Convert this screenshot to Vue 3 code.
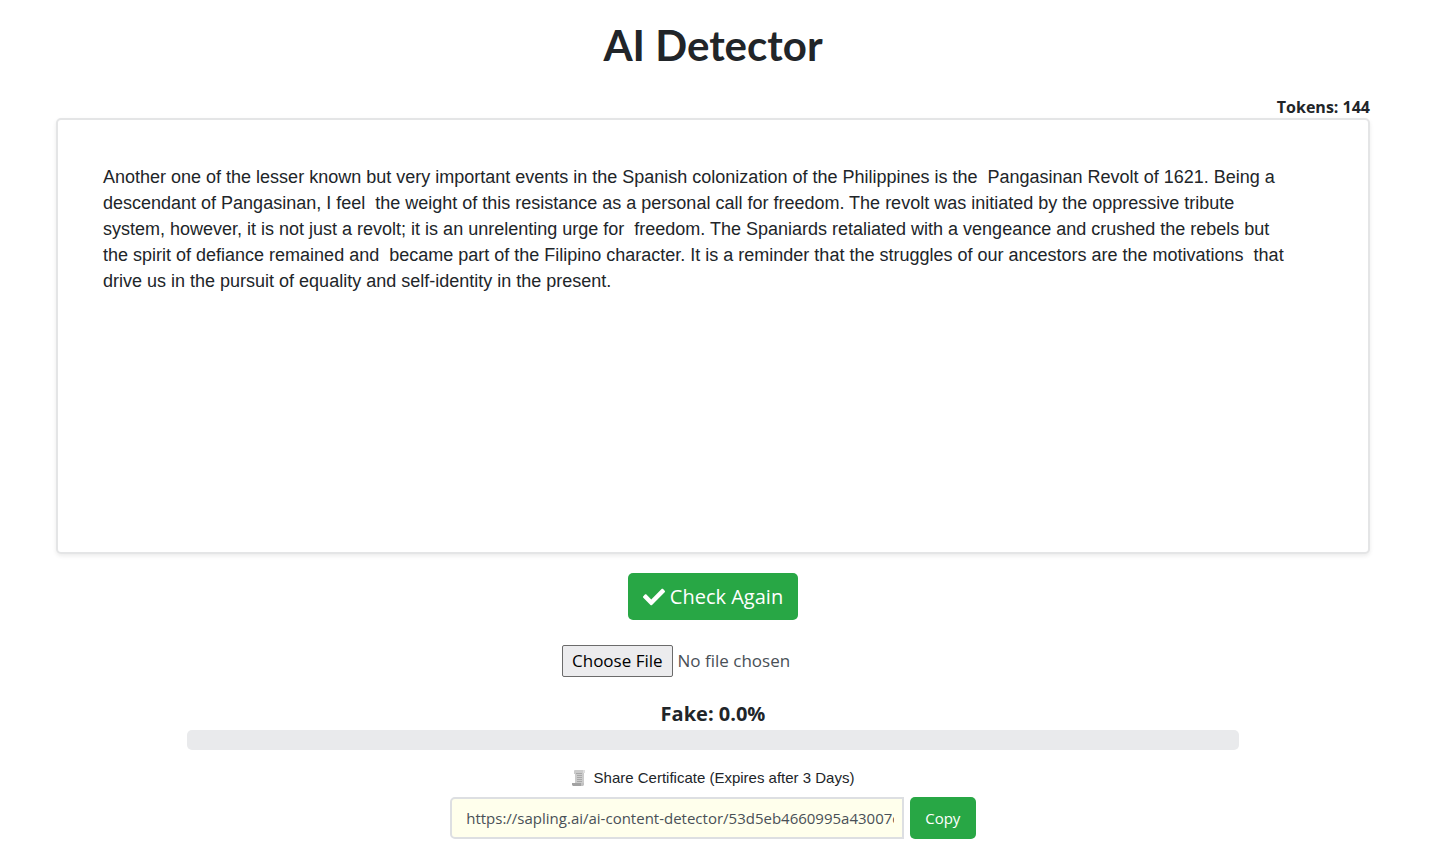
<script setup>
import { ref } from 'vue'

const text = ref(
  'Another one of the lesser known but very important events in the Spanish colonization of the Philippines is the  Pangasinan Revolt of 1621. Being a descendant of Pangasinan, I feel  the weight of this resistance as a personal call for freedom. The revolt was initiated by the oppressive tribute system, however, it is not just a revolt; it is an unrelenting urge for  freedom. The Spaniards retaliated with a vengeance and crushed the rebels but the spirit of defiance remained and  became part of the Filipino character. It is a reminder that the struggles of our ancestors are the motivations  that drive us in the pursuit of equality and self-identity in the present.'
)
const tokens = ref(144)
const fake = ref(0)
const shareUrl = ref('https://sapling.ai/ai-content-detector/53d5eb4660995a43007c')
</script>

<template>
  <main class="page">
    <h1 class="title">AI Detector</h1>
    <div class="tokens">Tokens: {{ tokens }}</div>
    <textarea v-model="text" class="editor" aria-label="Text to check" spellcheck="false"></textarea>

    <button type="button" class="btn check">
      <svg class="tick" viewBox="0 0 512 512" aria-hidden="true">
        <path fill="currentColor" d="M173.9 439.4l-166.4-166.4c-10-10-10-26.2 0-36.2l36.2-36.2c10-10 26.2-10 36.2 0L192 312.7 432.1 72.6c10-10 26.2-10 36.2 0l36.2 36.2c10 10 10 26.2 0 36.2l-294.4 294.4c-10 10-26.2 10-36.2 0z" />
      </svg>
      <span>Check Again</span>
    </button>

    <input type="file" class="file" aria-label="Upload a file" />

    <div class="score">Fake: {{ fake.toFixed(1) }}%</div>
    <div class="bar" role="progressbar" :aria-valuenow="fake" aria-valuemin="0" aria-valuemax="100">
      <div class="fill" :style="{ width: fake + '%' }"></div>
    </div>

    <label class="share-label" for="share-url">
      <svg class="scroll" viewBox="0 0 14 16" aria-hidden="true">
        <path fill="#cbcbcb" d="M2 1q0-1 1-1h10v3h-1v12H3V4H2z" />
        <path fill="#dedede" d="M11 0h2v3h-2z" />
        <path stroke="#a8a8a8" fill="none" d="M4 3.500h6M5 5.500h5M5 7.500h5M5 9.500h5M5 11.500h5" />
        <path fill="#a2a2a2" d="M0 13h9v3H1l-1-1z" />
        <path fill="#c2c2c2" d="M9 13h3v2l-1 1H9z" />
      </svg>
      <span>Share Certificate (Expires after 3 Days)</span>
    </label>
    <div class="share">
      <input id="share-url" type="text" class="url" :value="shareUrl" readonly />
      <button type="button" class="btn copy">Copy</button>
    </div>
  </main>
</template>

<style>
body {
  margin: 0;
  background: #fff;
}
</style>

<style scoped>
* {
  box-sizing: border-box;
}
.page {
  display: flex;
  flex-direction: column;
  align-items: center;
  padding: 20px 63px 24px 56px;
  color: #212529;
  font-family: "Open Sans", "Noto Sans", sans-serif;
}
.title {
  margin: 0;
  font: 700 42px/50px Lato, sans-serif;
}
.tokens {
  align-self: flex-end;
  margin-top: 26px;
  font-size: 16px;
  font-weight: 700;
  line-height: 22px;
}
.editor {
  display: block;
  width: 100%;
  height: 436px;
  padding: 44px 75px 44px 45px;
  border: 2px solid #e4e5e6;
  border-radius: 5px;
  box-shadow: 0 2px 4px rgba(0, 0, 0, 0.08);
  background: #fff;
  color: #212529;
  font: 18px/26px "Liberation Sans", Arial, sans-serif;
  resize: none;
  outline: none;
}
.btn {
  border: 0;
  border-radius: 5px;
  background: #28a745;
  color: #fff;
  font-family: inherit;
  cursor: pointer;
}
.check {
  display: flex;
  align-items: center;
  gap: 5px;
  height: 47px;
  margin-top: 19px;
  padding: 0 15px;
  font-size: 20px;
}
.tick {
  width: 22px;
  height: 22px;
}
.file {
  width: 302px;
  height: 32px;
  margin-top: 25px;
  color: #495057;
  font: 17px/30px "Open Sans", "Noto Sans", sans-serif;
}
.file::file-selector-button {
  box-sizing: border-box;
  height: 32px;
  margin: 0 5px 0 0;
  padding: 0 9px;
  border: 1px solid #6b6b6b;
  border-radius: 2px;
  background: #ececee;
  color: #000;
  font: inherit;
}
.score {
  margin-top: 23px;
  font-size: 20px;
  font-weight: 700;
  line-height: 28px;
}
.bar {
  width: 80%;
  height: 20px;
  margin-top: 2px;
  overflow: hidden;
  border-radius: 5px;
  background: #e9eaec;
}
.fill {
  height: 100%;
  background: #dc3545;
}
.share-label {
  display: flex;
  align-items: center;
  gap: 8px;
  margin-top: 18px;
  font: 15px/20px "Liberation Sans", Arial, sans-serif;
}
.scroll {
  width: 14px;
  height: 16px;
}
.share {
  display: flex;
  gap: 6px;
  width: 40%;
  height: 42px;
  margin-top: 9px;
}
.url {
  flex: 1;
  min-width: 0;
  padding: 0 8px 0 14px;
  border: 2px solid #dddfe2;
  border-radius: 5px 0 0 5px;
  background: #ffffec;
  color: #495057;
  font: 15px "Open Sans", "Noto Sans", sans-serif;
  outline: none;
}
.copy {
  width: 66px;
  padding: 0;
  font-size: 15px;
}
</style>
